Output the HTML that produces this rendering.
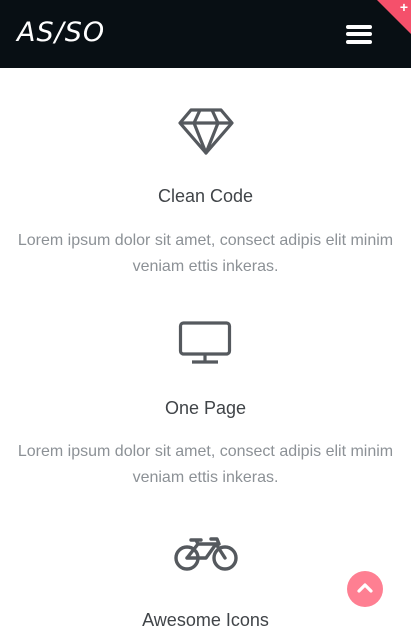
<!DOCTYPE html>
<html><head><style>
body{margin:0;width:411px;height:637px;overflow:hidden;background:#fff;font-family:"Liberation Sans",sans-serif;position:relative}
.hdr{position:absolute;left:0;top:0;width:411px;height:68px;background:#080f14}
.logo{position:absolute;left:17px;top:17px;color:#fff;font-family:"Comic Sans MS","DejaVu Sans",sans-serif;font-style:italic;font-size:27px;letter-spacing:1px}
.bar{position:absolute;left:346px;width:26px;height:4px;border-radius:2px;background:#fff}
.corner{position:absolute;right:0;top:0;width:0;height:0;border-top:34px solid #f5506b;border-left:34px solid transparent}
.plus{position:absolute;right:3px;top:0px;color:#fff;font-weight:bold;font-size:14px;line-height:14px}
.t{position:absolute;left:0;width:411px;text-align:center;color:#404448;font-size:18px}
.p{position:absolute;left:5px;width:401px;text-align:center;color:#8c9196;font-size:16px;line-height:26px}
svg{position:absolute}
.up{position:absolute;left:347px;top:571px;width:36px;height:36px;border-radius:50%;background:#fe7f92}
</style></head><body>
<div class="hdr"><div class="logo">AS/SO</div>
<div class="bar" style="top:25px"></div><div class="bar" style="top:32px"></div><div class="bar" style="top:40px"></div>
<div class="corner"></div><div class="plus">+</div></div>
<svg style="left:178px;top:107px" width="56" height="48" viewBox="0 0 56 48"><g fill="none" stroke="#55595e" stroke-width="3.2" stroke-linejoin="round"><path d="M13 3H43L54 16L28 46L2 16Z"/><path d="M2 16H54M22 3L16 16L28 46L40 16L34 3"/></g></svg>
<div class="t" style="top:186px">Clean Code</div>
<div class="p" style="top:228px">Lorem ipsum dolor sit amet, consect adipis elit minim veniam ettis inkeras.</div>
<svg style="left:178px;top:320px" width="54" height="44" viewBox="0 0 54 44"><g fill="none" stroke="#55595e" stroke-width="3.2"><rect x="2.5" y="3" width="49" height="31" rx="3"/><path d="M27 34V41M14 42H40"/></g></svg>
<div class="t" style="top:398px">One Page</div>
<div class="p" style="top:439px">Lorem ipsum dolor sit amet, consect adipis elit minim veniam ettis inkeras.</div>
<svg style="left:174px;top:535px" width="66" height="38" viewBox="0 0 66 38"><g fill="none" stroke="#55595e" stroke-width="3.4" stroke-linecap="round" stroke-linejoin="round"><circle cx="13" cy="23" r="11"/><circle cx="51" cy="23" r="11"/><path d="M13 23L24 9H42L32 23H13M42 9L51 23M24 9L22 5M17 5H27M37 4H43L45 9"/></g></svg>
<div class="t" style="top:610px">Awesome Icons</div>
<div class="up"><svg style="left:10px;top:11px" width="16" height="12" viewBox="0 0 16 12"><path d="M2 9L8 3L14 9" fill="none" stroke="#fff" stroke-width="3.2" stroke-linecap="round" stroke-linejoin="round"/></svg></div>
</body></html>
